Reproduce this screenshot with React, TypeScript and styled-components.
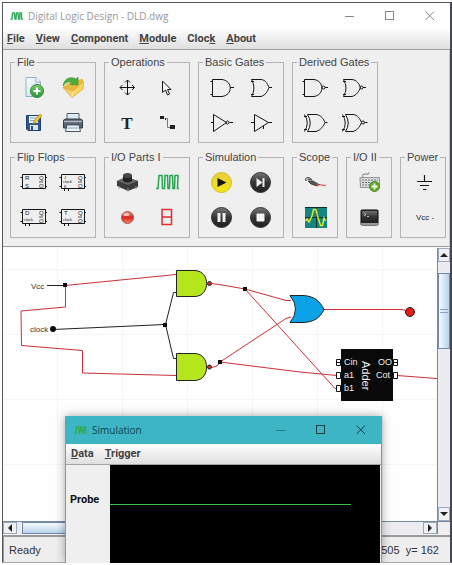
import React from 'react';
import styled, { createGlobalStyle } from 'styled-components';

const GlobalStyle = createGlobalStyle`
  * { box-sizing: border-box; }
  html, body { margin: 0; padding: 0; }
  body { background: #fdfdfd; font-family: "Liberation Sans", Arial, sans-serif; font-size: 11px; color: #333; }
  button { font: inherit; color: inherit; border: 0; background: none; padding: 0; margin: 0; }
`;

/* ---------- shared window parts ---------- */

const Desktop = styled.div`
  position: relative;
  display: flex;
  min-height: 100vh;
  padding: 2px 0 2px 2px;
`;

const MainWindow = styled.main`
  flex: 1;
  min-width: 0;
  display: flex;
  flex-direction: column;
  background: #eeeeee;
  border: 1px solid #55565a;
  border-right: 2px solid #45464e;
  border-bottom-color: #a9a9a9;
`;

const TitleBar = styled.header<{ $active?: boolean }>`
  display: flex;
  align-items: center;
  height: ${(p) => (p.$active ? 28 : 25)}px;
  padding-left: ${(p) => (p.$active ? 8 : 7)}px;
  gap: 5px;
  background: ${(p) => (p.$active ? '#3db5c5' : '#fefefe')};
  color: ${(p) => (p.$active ? '#0c4650' : '#999')};
  flex: none;
`;

const TitleText = styled.h1`
  flex: 1;
  margin: 0;
  font: 400 10px/14px "Open Sans", "Noto Sans", sans-serif;
  white-space: nowrap;
`;

const Controls = styled.div`
  display: flex;
  align-self: stretch;
`;

const ControlButton = styled.button`
  width: 40px;
  display: grid;
  place-items: center;
`;

const MenuBar = styled.nav<{ $tall?: boolean }>`
  display: flex;
  align-items: ${(p) => (p.$tall ? 'flex-start' : 'center')};
  gap: 11px;
  flex: none;
  height: ${(p) => (p.$tall ? 22 : 21)}px;
  padding: ${(p) => (p.$tall ? '4px 4px 0' : '0 5px')};
  background: linear-gradient(#fefefe, #f0f0f0 45%, #dfdfdf);
  border-bottom: 1px solid #a4a4a4;
`;

const MenuButton = styled.button`
  font: 700 11px/14px Roboto, sans-serif;
  color: #444;
`;

const Menu = ({ label, at = 0 }: { label: string; at?: number }) => (
  <MenuButton type="button">
    {label.slice(0, at)}
    <u>{label[at]}</u>
    {label.slice(at + 1)}
  </MenuButton>
);

const WindowControls = ({ color, dim }: { color: string; dim: string }) => (
  <Controls>
    <ControlButton type="button" aria-label="Minimize">
      <svg width="10" height="10"><path d="M0 5.5H9" stroke={dim} /></svg>
    </ControlButton>
    <ControlButton type="button" aria-label="Maximize">
      <svg width="10" height="10"><rect x="0.5" y="0.5" width="8" height="8" fill="none" stroke={color} /></svg>
    </ControlButton>
    <ControlButton type="button" aria-label="Close">
      <svg width="10" height="10"><path d="M0.5 0.5L9 9M9 0.5L0.5 9" stroke={color} /></svg>
    </ControlButton>
  </Controls>
);

const WaveLogo = () => (
  <svg width="13" height="10" fill="none" stroke="#32ab5d" strokeWidth="1.4">
    <path d="M0.5 8H2L2.5 2H4.5L5 8H6L6.5 2H8L8.5 8H9.5L10 2H11.5V8H13" />
  </svg>
);

/* ---------- toolbar ---------- */

const Toolbar = styled.section`
  flex: none;
  display: flex;
  flex-direction: column;
  gap: 7px;
  padding: 6px 3px 7px 7px;
  background: #efeff0;
  border-right: 1px solid #c4c4c8;
  border-bottom: 1px solid #9c9c9c;
`;

const GroupRow = styled.div`
  display: flex;
  gap: 8px;
`;

const Group = styled.fieldset<{ $narrow?: boolean }>`
  width: ${(p) => (p.$narrow ? 46 : 86)}px;
  min-width: 0;
  height: 87px;
  margin: 0 0 1px;
  padding: 2px 0 0;
  border: 1px solid #b3b3b5;
`;

const GroupTitle = styled.legend`
  margin-left: 4px;
  padding: 0 2px;
  line-height: 12px;
  white-space: nowrap;
  color: #444;
`;

const ToolGrid = styled.div<{ $narrow?: boolean }>`
  display: grid;
  grid-template-columns: repeat(${(p) => (p.$narrow ? 1 : 2)}, 39px);
  grid-auto-rows: 35px;
  justify-content: center;
`;

const ToolButton = styled.button`
  display: grid;
  place-items: center;
`;

type Tool = [string, React.ReactNode];

const ToolGroup = ({ title, tools, narrow }: { title: string; tools: Tool[]; narrow?: boolean }) => (
  <Group $narrow={narrow}>
    <GroupTitle>{title}</GroupTitle>
    <ToolGrid $narrow={narrow}>
      {tools.map(([name, art]) => (
        <ToolButton type="button" key={name} aria-label={name}>
          <svg width="27" height="27" viewBox="0 0 27 27" fill="none">{art}</svg>
        </ToolButton>
      ))}
    </ToolGrid>
  </Group>
);

const ink = '#151515';

const NewIcon = (
  <g>
    <path d="M6 3.5H16L20.5 8V22.5H6Z" fill="url(#paper)" stroke="#8fb0c4" />
    <path d="M16 3.5V8H20.5" fill="#fff" stroke="#8fb0c4" />
    <circle cx="17" cy="17" r="6.5" fill="url(#green)" stroke="#2c8c36" />
    <path d="M17 13.5V20.5M13.5 17H20.5" stroke="#fff" strokeWidth="2" />
  </g>
);
const OpenIcon = (
  <g>
    <path d="M4 13L12 7L24 5V15L13 23.5Z" fill="#e9b93f" />
    <path d="M4 13.5L14 17L24.5 7.5L24 15L13 23.5Z" fill="#f7d667" stroke="#d5a02e" strokeWidth="0.7" />
    <path d="M14 17L13 23" stroke="#fff0a8" />
    <path d="M4 12C5 4 12 2 17 5L19 3V11L11 10.5L13.5 8.5C10 7 7 8 4 12Z" fill="#4dae3f" stroke="#2f8b34" strokeWidth="0.6" />
  </g>
);
const SaveIcon = (
  <g>
    <path d="M6.5 6.5H20.5V21.5H8L6.5 20Z" fill="#31588e" stroke="#203f70" />
    <rect x="9" y="7" width="9" height="7" fill="#e7f0f5" />
    <path d="M10 9H17M10 11.5H15" stroke="#8aa5b8" />
    <rect x="10" y="16" width="8" height="5" fill="#dce6ec" />
    <rect x="11" y="17" width="2" height="4" fill="#294b7c" />
    <path d="M13 15L14 12L20 5L22 7L16 13.5Z" fill="#f1c62f" stroke="#a5781d" strokeWidth="0.6" />
  </g>
);
const PrintIcon = (
  <g>
    <path d="M8 4.5H20V11H8Z" fill="#d8ebf7" stroke="#50606b" />
    <path d="M4.5 12Q4.5 10 7 10H21Q23.5 10 23.5 12V19H4.5Z" fill="#59636d" stroke="#343d46" />
    <path d="M5 12.5H23" stroke="#aeb9c1" strokeWidth="1.5" />
    <path d="M8 16H20L21.5 22.5H6.5Z" fill="#f1f7fa" stroke="#4b5660" />
    <path d="M8.5 19H19.5" stroke="#6fa1c4" />
  </g>
);
const MoveIcon = (
  <path d="M6 13.5H20M13.5 6V21M11 8.5L13.5 6L16 8.5M11 18.5L13.5 21L16 18.5M8.5 11L6 13.5L8.5 16M18 11L20.5 13.5L18 16" stroke={ink} />
);
const CursorIcon = (
  <path d="M9.5 7V18.5L12.5 16L14.5 21L16.5 20L14.5 15.5H18Z" stroke={ink} fill="#f8f8f8" />
);
const TextIcon = (
  <text x="13" y="20" textAnchor="middle" fontFamily="Liberation Serif, serif" fontWeight="700" fontSize="17" fill="#222">T</text>
);
const WireIcon = (
  <g>
    <rect x="7" y="7" width="4" height="3" fill="#222" />
    <rect x="12" y="9" width="1" height="2" fill="#222" />
    <path d="M12.5 9.5H14.5V18.5H18" stroke="#777" />
    <rect x="17" y="16" width="5" height="4" fill="#222" />
  </g>
);
const Bubble = ({ x }: { x: number }) => <circle cx={x} cy="13.5" r="1.5" stroke={ink} />;
const AndIcon = (
  <path d="M2.5 7.5H5M2.5 20.5H5M4.5 5.5H14C25 7 25 21 14 22.5H4.5ZM22.5 13.5H26" stroke={ink} />
);
const OrIcon = (
  <path d="M4 7.5H7M4 20.5H7M4.5 5.5H14C19 6 20.5 10 22 13.5C20.5 17 19 21 14 22.5H4.5Q9.5 14 4.5 5.5ZM22 13.5H25" stroke={ink} />
);
const NotIcon = (
  <g><path d="M3 13.5H5.5M5.5 5.5L18.5 13.5L5.5 22.5ZM21.5 13.5H25" stroke={ink} /><Bubble x={19.5} /></g>
);
const BufferIcon = <path d="M4 13.5H7M7.5 5.5L21.5 13.5L7.5 22.5ZM21 13.5H25M16.5 16.5V20" stroke={ink} />;
const NandIcon = (
  <g><path d="M0.5 7.5H3M0.5 20.5H3M2.5 5.5H12C22.5 7 22.5 21 12 22.5H2.5ZM23 13.5H26" stroke={ink} /><Bubble x={21.5} /></g>
);
const NorIcon = (
  <g>
    <path d="M2 7.5H5M2 20.5H5M2.5 5.5H11C16 6 18 10 19.5 13.5C18 17 16 21 11 22.5H2.5Q7.5 14 2.5 5.5ZM22 13.5H25" stroke={ink} />
    <Bubble x={20.5} />
  </g>
);
const XorIcon = (
  <path d="M2 7.5H5M2 20.5H5M2.5 5.5Q8 14 2.5 22.5M5.5 5.5H14C19 6 21.5 10 23 13.5C21.5 17 19 21 14 22.5H5.5Q11 14 5.5 5.5ZM23 13.5H25.5" stroke={ink} />
);
const XnorIcon = (
  <g>
    <path d="M1 7.5H4M1 20.5H4M1.5 5.5Q7 14 1.5 22.5M4.5 5.5H12C17 6 19 10 20.5 13.5C19 17 17 21 12 22.5H4.5Q10 14 4.5 5.5ZM23.5 13.5H26.5" stroke={ink} />
    <Bubble x={22} />
  </g>
);
const flipFlop = (top: string, bottom: string, clocked: boolean) => {
  const small = clocked && bottom !== '';
  return (
    <g>
      <path d="M2.5 5.5H25.5V19.5H2.5ZM0.5 8.5H2.5M0.5 17.5H2.5M25.5 8.5H27M25.5 17.5H27" stroke={ink} />
      {clocked && <path d="M5.5 20V22M9.5 20V22" stroke={ink} />}
      <g fill="#222" fontSize={small ? 4 : 6} fontFamily="Liberation Sans, sans-serif">
        <text x="5" y={small ? 9.5 : 11}>{top}</text>
        {bottom && <text x="5" y="18.5">{bottom}</text>}
        {clocked && <text x="4" y={small ? 14 : 16.5} fontSize="4">clock</text>}
      </g>
      <g fill="#222" fontSize="6" fontFamily="Liberation Sans, sans-serif">
        <text x="19" y="11">Q</text>
        <text x="19" y="18.5">Q</text>
      </g>
      <path d="M19 13H23" stroke={ink} strokeWidth="0.7" />
    </g>
  );
};
const PushIcon = (
  <g>
    <path d="M3 12L12 8L24 12V18L14 22L3 17Z" fill="#3b3b3b" />
    <path d="M3 12L12 8L24 12L14 16Z" fill="#666" />
    <path d="M9 6V12Q13.5 15 18 12V6Z" fill="#222" />
    <ellipse cx="13.5" cy="6.5" rx="4.5" ry="2.5" fill="#484848" />
    <path d="M5 17V20M14 19V22.5M22 17V20" stroke="#999" />
  </g>
);
const ClockIcon = (
  <path d="M3 19.5H5L6 6.5H9L9.5 19.5H11.5L12 6.5H14.5L15 19.5H16.5L17 6.5H19.5L20 19.5H21.5L22 6.5H25L24.5 19.5H26" stroke="#29a350" strokeWidth="1.5" />
);
const LedIcon = (
  <g>
    <circle cx="13.5" cy="13.5" r="6" fill="url(#led)" stroke="#a45b51" />
    <ellipse cx="12.5" cy="10.5" rx="3" ry="1.5" fill="#ffc4b5" />
  </g>
);
const SegmentIcon = <path d="M9 5.5H18.5V20.5H9ZM9 13H18.5" stroke="#e02d32" strokeWidth="1.5" />;
const disc = (fill: string, rim: string, glyph: React.ReactNode) => (
  <g>
    <circle cx="13.5" cy="13.5" r="10" fill={fill} stroke={rim} />
    {glyph}
  </g>
);
const PlayIcon = disc('url(#gold)', '#d3bd22', <path d="M9.5 9L18.5 13.5L9.5 18Z" fill="#161616" />);
const StepIcon = disc('url(#dark)', '#333', <g><path d="M9.5 9L15.5 13.5L9.5 18Z" fill="#eee" /><rect x="15.5" y="9" width="2" height="9" fill="#eee" /></g>);
const PauseIcon = disc('url(#dark)', '#333', <path d="M9.5 9H12.5V18H9.5ZM14.5 9H17.5V18H14.5Z" fill="#eee" />);
const StopIcon = disc('url(#dark)', '#333', <rect x="9.5" y="9.5" width="8" height="8" rx="1" fill="#f4f4f4" />);
const ProbeIcon = (
  <g>
    <path d="M4 12Q2 9 6 8.5Q9 8.5 10 11Q8 9.5 6 11" fill="#aaa" stroke="#555" />
    <path d="M6 12L11 12L17 15.5L15 17L9 15Z" fill="#555" stroke="#333" strokeWidth="0.8" />
    <path d="M14 15.5L24 16.5" stroke="#d6797d" strokeWidth="1.5" />
    <path d="M14 15.5H18" stroke="#ad3e45" />
  </g>
);
const ScopeIcon = (
  <g>
    <rect x="3" y="3" width="22" height="21" fill="#16847f" />
    <path d="M3 3.5H25M3 13.5H25M14.5 3V24" stroke="#062f30" />
    <path d="M3.5 17L5 15L7 18L10 12L11.5 5.5H14L15.5 12L18.5 21.5H20.5L22 14L23.5 17" stroke="#d9e92d" strokeWidth="1.5" />
  </g>
);
const KeyboardIcon = (
  <g>
    <path d="M7 8Q5 5 10 5Q13 6 13 3.5" stroke="#777" />
    <path d="M4 8.5H23.5V18.5H4.5Z" fill="#d8dada" stroke="#929694" />
    <path d="M6 11H22M6 13.5H22M6 16H20" stroke="#777" strokeDasharray="2 1" />
    <circle cx="18.5" cy="17.5" r="5" fill="#63a92f" stroke="#4e8726" />
    <path d="M18.5 14.5V20.5M15.5 17.5H21.5" stroke="#efffdc" strokeWidth="1.8" />
  </g>
);
const TerminalIcon = (
  <g>
    <rect x="4.5" y="5.5" width="18" height="16" rx="2" fill="#999" stroke="#777" />
    <rect x="5.5" y="6.5" width="16" height="12" fill="url(#dark)" stroke="#222" />
    <path d="M8 9L10 10.5L8 12M11 12.5H13" stroke="#ddd" strokeWidth="0.8" />
  </g>
);
const GroundIcon = (
  <path d="M14.5 6V12M7 12.5H22M10 16.5H19M13 20.5H16.5" stroke={ink} strokeWidth="1.2" />
);
const VccIcon = (
  <text x="6" y="16" fontFamily="Liberation Sans, sans-serif" fontSize="8" fill="#222">Vcc -</text>
);

const PaletteSvg = styled.svg`
  position: absolute;
`;

const Palette = () => (
  <PaletteSvg width="0" height="0" aria-hidden="true">
    <defs>
      <linearGradient id="paper" x2="1" y2="1"><stop stopColor="#fff" /><stop offset="1" stopColor="#bcd8e7" /></linearGradient>
      <linearGradient id="green" x2="0" y2="1"><stop stopColor="#7ccb6b" /><stop offset="1" stopColor="#269637" /></linearGradient>
      <linearGradient id="gold" x2="0" y2="1"><stop stopColor="#e6cf3c" /><stop offset="1" stopColor="#f3e614" /></linearGradient>
      <linearGradient id="dark" x2="0" y2="1"><stop stopColor="#777" /><stop offset="0.5" stopColor="#353535" /><stop offset="1" stopColor="#202020" /></linearGradient>
      <linearGradient id="led" x2="0" y2="1"><stop stopColor="#f18a78" /><stop offset="0.5" stopColor="#d6261d" /><stop offset="1" stopColor="#ff8170" /></linearGradient>
    </defs>
  </PaletteSvg>
);

/* ---------- canvas and scroll bars ---------- */

const Workspace = styled.section`
  flex: 1;
  min-height: 200px;
  display: grid;
  grid-template-columns: 1fr 13px;
  grid-template-rows: 1fr 13px;
  border-top: 1px solid #f8f8f8;
  border-bottom: 1px solid #f2f2f2;
`;

const Sheet = styled.div`
  position: relative;
  min-width: 0;
  min-height: 0;
  overflow: hidden;
  background: #fefefe;
`;

const Drawing = styled.svg`
  position: absolute;
  inset: 0;
  width: 100%;
  height: 100%;
`;

const ScrollBar = styled.div<{ $vertical?: boolean }>`
  display: flex;
  flex-direction: ${(p) => (p.$vertical ? 'column' : 'row')};
  background: #ececf0;
  ${(p) => (p.$vertical ? 'border-left' : 'border-top')}: 1px solid #7389a5;
`;

const ScrollArrow = styled.button<{ $vertical?: boolean }>`
  flex: none;
  width: ${(p) => (p.$vertical ? 'auto' : '14px')};
  height: ${(p) => (p.$vertical ? '14px' : 'auto')};
  display: grid;
  place-items: center;
  background: #f0f0f3;
  border: 1px solid #9aaabd;
`;

const Thumb = styled.div<{ $vertical?: boolean }>`
  flex: none;
  display: grid;
  place-items: center;
  border: 1px solid #7389a5;
  margin: ${(p) => (p.$vertical ? '11px 0 auto' : '0 auto 0 5px')};
  ${(p) => (p.$vertical ? 'height: 76px' : 'width: 70%')};
  background: linear-gradient(${(p) => (p.$vertical ? '90deg' : '180deg')}, #f6fbff, #b9d2ea);
`;

const Corner = styled.div`
  background: #eee;
  border-top: 1px solid #7389a5;
  border-left: 1px solid #7389a5;
`;

const Arrow = ({ d }: { d: string }) => (
  <svg width="8" height="8"><path d={d} fill="#222" /></svg>
);

const wire = '#cc2f3a';

const Circuit = () => (
  <Drawing>
    <defs>
      <pattern id="grid" width="65" height="65" patternUnits="userSpaceOnUse" x="54" y="21">
        <path d="M0.5 0V65M0 0.5H65" stroke="#f5f5f6" />
      </pattern>
    </defs>
    <rect width="100%" height="100%" fill="url(#grid)" />
    <g transform="translate(-3 -248)" fill="none" stroke={wire}>
      <path d="M65 285.5L176 274.5M65.5 285V307L21 311L21.5 345.5L82.5 350.5V373L176 375.5" />
      <path d="M212 283.5L225 285.5L245 289L286 300.5H291M245 289L335 388.5H337" />
      <path d="M212 367.5L217 366L220 362L286 318.5L291 317M220 362L300 372L337 375.5" />
      <path d="M324 309.5H402L408 311M397 375.5L437 378.5" />
      <g stroke="#222">
        <path d="M47 285.5H65M53 329.5L165 324.5M176 292.5H173.5L165.5 324.5L173.5 358.5H176" />
        <path d="M176.5 270.5H195C210.5 271 210.5 296 195 296.5H176.5Z" fill="#b5e61d" />
        <path d="M176.5 353.5H195C210.5 354 210.5 380 195 380.5H176.5Z" fill="#b5e61d" />
        <path d="M290 295.5H303C314 296 320 301 324 309.5C320 318 314 322 303 322.5H290Q301 309 290 295.5Z" fill="#0ba2e8" />
        <circle cx="209.5" cy="283.5" r="2" fill="#cc3333" />
        <circle cx="209.5" cy="367" r="2" fill="#cc3333" />
        <circle cx="410" cy="312" r="4.5" fill="#e51b1b" />
      </g>
      <g fill="#0a0a0a" stroke="none">
        <circle cx="53" cy="329" r="3" />
        <rect x="63" y="283" width="4" height="4" />
        <rect x="163" y="323" width="4" height="4" />
        <rect x="243" y="287" width="4" height="4" />
        <rect x="218" y="360" width="4" height="4" />
        <rect x="341" y="349" width="52" height="52" />
      </g>
      <g stroke="#111" fill="#fff">
        <path d="M336.5 359.5H340.5V365.5H336.5ZM336.5 362.5H340M336.5 372.5H340.5V378.5H336.5ZM336.5 385.5H340.5V391.5H336.5Z" />
        <path d="M393.5 359.5H397.5V365.5H393.5ZM394 362.5H398M393.5 372.5H397.5V378.5H393.5Z" />
      </g>
      <g stroke="none" fill="#333" fontSize="8" fontFamily="Liberation Sans, sans-serif">
        <text x="31" y="289">Vcc</text>
        <text x="30" y="332">clock</text>
      </g>
      <g stroke="none" fill="#eee" fontSize="9" fontFamily="Liberation Sans, sans-serif">
        <text x="344" y="365">Cin</text>
        <text x="344" y="378">a1</text>
        <text x="344" y="391">b1</text>
        <text x="378" y="365">OO</text>
        <text x="376" y="378">Cot</text>
        <text transform="translate(362 361) rotate(90)" fontSize="11">Adder</text>
      </g>
    </g>
  </Drawing>
);

const StatusBar = styled.footer`
  flex: none;
  display: flex;
  justify-content: space-between;
  height: 27px;
  padding: 6px 11px 0 5px;
  border-top: 2px solid #9a9a9a;
  border-left: 1px solid #9a9a9a;
  line-height: 14px;
  white-space: pre;
  background: #eee;
`;

/* ---------- simulation dialog ---------- */

const Dialog = styled.section`
  position: absolute;
  left: 65px;
  right: 70px;
  top: 416px;
  bottom: 2px;
  display: flex;
  flex-direction: column;
  background: #efeff0;
  border: 1px solid #3db5c5;
  border-width: 0 1px;
  box-shadow: 0 0 9px rgba(0, 0, 0, 0.35);
  clip-path: inset(-12px -12px 0 -12px);
`;

const Traces = styled.div`
  flex: 1;
  display: grid;
  grid-template-columns: 44px 1fr;
  padding-right: 1px;
`;

const ProbeName = styled.div`
  padding: 28px 0 0 4px;
  font: 700 11px/14px Roboto, sans-serif;
  color: #111;
`;

const Screen = styled.div`
  background: #000;
  padding: 39px 29px 0 0;
`;

const Trace = styled.div`
  height: 1px;
  background: #3fc046;
`;

export default function App() {
  return (
    <>
      <GlobalStyle />
      <Palette />
      <Desktop>
        <MainWindow>
          <TitleBar>
            <WaveLogo />
            <TitleText>Digital Logic Design - DLD.dwg</TitleText>
            <WindowControls color="#888" dim="#888" />
          </TitleBar>
          <MenuBar $tall>
            <Menu label="File" />
            <Menu label="View" />
            <Menu label="Component" />
            <Menu label="Module" />
            <Menu label="Clock" at={4} />
            <Menu label="About" />
          </MenuBar>
          <Toolbar>
            <GroupRow>
              <ToolGroup title="File" tools={[['New', NewIcon], ['Open', OpenIcon], ['Save', SaveIcon], ['Print', PrintIcon]]} />
              <ToolGroup title="Operations" tools={[['Move', MoveIcon], ['Select', CursorIcon], ['Text', TextIcon], ['Wire', WireIcon]]} />
              <ToolGroup title="Basic Gates" tools={[['AND', AndIcon], ['OR', OrIcon], ['NOT', NotIcon], ['Buffer', BufferIcon]]} />
              <ToolGroup title="Derived Gates" tools={[['NAND', NandIcon], ['NOR', NorIcon], ['XOR', XorIcon], ['XNOR', XnorIcon]]} />
            </GroupRow>
            <GroupRow>
              <ToolGroup
                title="Flip Flops"
                tools={[
                  ['SR flip flop', flipFlop('R', 'S', false)],
                  ['JK flip flop', flipFlop('J', 'K', true)],
                  ['D flip flop', flipFlop('D', '', true)],
                  ['T flip flop', flipFlop('T', '', true)],
                ]}
              />
              <ToolGroup title="I/O Parts I" tools={[['Push button', PushIcon], ['Clock', ClockIcon], ['LED', LedIcon], ['Seven segment', SegmentIcon]]} />
              <ToolGroup title="Simulation" tools={[['Play', PlayIcon], ['Step', StepIcon], ['Pause', PauseIcon], ['Stop', StopIcon]]} />
              <ToolGroup narrow title="Scope" tools={[['Probe', ProbeIcon], ['Scope', ScopeIcon]]} />
              <ToolGroup narrow title="I/O II" tools={[['Keyboard', KeyboardIcon], ['Terminal', TerminalIcon]]} />
              <ToolGroup narrow title="Power" tools={[['Ground', GroundIcon], ['Vcc', VccIcon]]} />
            </GroupRow>
          </Toolbar>
          <Workspace>
            <Sheet><Circuit /></Sheet>
            <ScrollBar $vertical>
              <ScrollArrow $vertical type="button" aria-label="Scroll up"><Arrow d="M0 6L4 2L8 6Z" /></ScrollArrow>
              <Thumb $vertical>
                <svg width="8" height="4"><path d="M0 0.5H8M0 3.5H8" stroke="#8aa3bf" /></svg>
              </Thumb>
              <ScrollArrow $vertical type="button" aria-label="Scroll down"><Arrow d="M0 2L4 6L8 2Z" /></ScrollArrow>
            </ScrollBar>
            <ScrollBar>
              <ScrollArrow type="button" aria-label="Scroll left"><Arrow d="M6 0L2 4L6 8Z" /></ScrollArrow>
              <Thumb />
              <ScrollArrow type="button" aria-label="Scroll right"><Arrow d="M2 0L6 4L2 8Z" /></ScrollArrow>
            </ScrollBar>
            <Corner />
          </Workspace>
          <StatusBar>
            <span>Ready</span>
            <span>505  y= 162</span>
          </StatusBar>
        </MainWindow>

        <Dialog role="dialog" aria-label="Simulation">
          <TitleBar $active>
            <WaveLogo />
            <TitleText as="h2">Simulation</TitleText>
            <WindowControls color="#0d3f49" dim="#1b7d8b" />
          </TitleBar>
          <MenuBar>
            <Menu label="Data" />
            <Menu label="Trigger" />
          </MenuBar>
          <Traces>
            <ProbeName>Probe</ProbeName>
            <Screen><Trace /></Screen>
          </Traces>
        </Dialog>
      </Desktop>
    </>
  );
}
